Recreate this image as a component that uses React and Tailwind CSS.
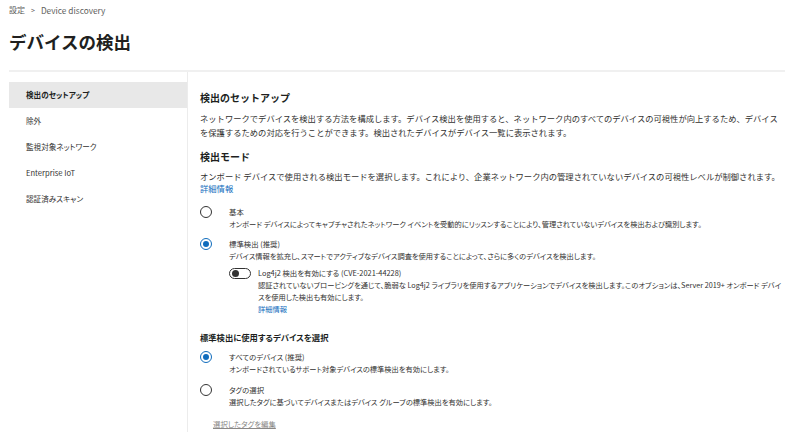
import React from 'react';

const jp = "font-['Segoe_UI','Noto_Sans_CJK_JP',sans-serif]";

const Radio = ({ checked }) => (
  <span
    className={`mt-[1px] flex h-[12px] w-[12px] shrink-0 items-center justify-center rounded-full border ${
      checked ? 'border-[#0f6cbd]' : 'border-[#333]'
    } bg-white`}
  >
    {checked && <span className="h-[6px] w-[6px] rounded-full bg-[#0f6cbd]" />}
  </span>
);

const Option = ({ checked, label, desc, children, className = '' }) => (
  <div className={`flex ${className}`}>
    <div className="w-[29px]">
      <Radio checked={checked} />
    </div>
    <div className="flex-1">
      <div className="text-[7.4px] leading-[13px] text-[#323130] [font-feature-settings:'palt']">{label}</div>
      <div className="text-[7.25px] leading-[13px] text-[#323130] [font-feature-settings:'palt']">{desc}</div>
      {children}
    </div>
  </div>
);

const navItems = ['検出のセットアップ', '除外', '監視対象ネットワーク', 'Enterprise IoT', '認証済みスキャン'];

export default function App() {
  return (
    <div className={`h-[433px] w-full overflow-hidden bg-white text-[#323130] ${jp}`}>
      <div className="flex items-center gap-[6px] pl-[9px] pt-[4px] text-[8px] leading-[12px] text-[#605e5c] [font-feature-settings:'palt']">
        <span>設定</span>
        <span className="text-[7px]">&gt;</span>
        <span className="text-[8.3px]">Device discovery</span>
      </div>
      <h1 className="mt-[14px] pl-[9px] text-[17.5px] font-semibold leading-[24px] text-[#201f1e]">デバイスの検出</h1>
      <div className="ml-[9px] mr-[15px] mt-[16px] flex border-t-2 border-[#f0f0f0]">
        <nav className="w-[179px] shrink-0 border-r border-[#ececec] pt-[10px]">
          {navItems.map((item, i) => (
            <div
              key={item}
              className={`flex items-center pl-[17px] text-[7.6px] [font-feature-settings:'palt'] ${
                i === 0 ? 'h-[26px] bg-[#e8e8e8] font-semibold text-[#201f1e]' : 'h-[26px] text-[#323130]'
              }`}
            >
              {item}
            </div>
          ))}
          <div className="h-[220px]" />
        </nav>
        <main className="flex-1 pl-[12px] pt-[19px]">
          <h2 className="text-[10px] font-bold leading-[14px] text-[#201f1e]">検出のセットアップ</h2>
          <p className="mt-[6px] text-[8.3px] leading-[14px] text-[#323130]">
            ネットワークでデバイスを検出する方法を構成します。デバイス検出を使用すると、ネットワーク内のすべてのデバイスの可視性が向上するため、デバイスを保護するための対応を行うことができます。検出されたデバイスがデバイス一覧に表示されます。
          </p>
          <h2 className="mt-[11px] text-[10px] font-bold leading-[14px] text-[#201f1e]">検出モード</h2>
          <p className="mt-[6px] text-[8.3px] leading-[12px] text-[#323130]">
            オンボード デバイスで使用される検出モードを選択します。これにより、企業ネットワーク内の管理されていないデバイスの可視性レベルが制御されます。
            <br />
            <span className="text-[#0f6cbd]">詳細情報</span>
          </p>
          <Option
            className="mt-[11px]"
            label="基本"
            desc="オンボード デバイスによってキャプチャされたネットワーク イベントを受動的にリッスンすることにより、管理されていないデバイスを検出および識別します。"
          />
          <Option
            className="mt-[6px]"
            checked
            label="標準検出 (推奨)"
            desc="デバイス情報を拡充し、スマートでアクティブなデバイス調査を使用することによって、さらに多くのデバイスを検出します。"
          >
            <div className="mt-[4px] flex">
              <span className="mt-[1px] flex h-[11px] w-[22px] shrink-0 items-center rounded-full border border-[#333] px-[2px]">
                <span className="h-[7px] w-[7px] rounded-full bg-[#333]" />
              </span>
              <div className="ml-[7px] flex-1 text-[7.25px] leading-[12px] [font-feature-settings:'palt'] [line-break:anywhere]">
                <div className="text-[7.4px]">Log4j2 検出を有効にする (CVE-2021-44228)</div>
                <div>
                  認証されていないプロービングを通じて、脆弱な Log4j2 ライブラリを使用するアプリケーションでデバイスを検出します。このオプションは、Server 2019+ オンボード デバイスを使用した検出も有効にします。
                </div>
                <div className="text-[#0f6cbd]">詳細情報</div>
              </div>
            </div>
          </Option>
          <h3 className="mt-[16px] text-[8.3px] font-semibold leading-[12px] text-[#201f1e] [font-feature-settings:'palt']">
            標準検出に使用するデバイスを選択
          </h3>
          <Option
            className="mt-[7px]"
            checked
            label="すべてのデバイス (推奨)"
            desc="オンボードされているサポート対象デバイスの標準検出を有効にします。"
          />
          <Option
            className="mt-[7px]"
            label="タグの選択"
            desc="選択したタグに基づいてデバイスまたはデバイス グループの標準検出を有効にします。"
          />
          <div className="mt-[9px] pl-[13px] text-[7.4px] leading-[12px] text-[#8a8886] underline [font-feature-settings:'palt']">
            選択したタグを編集
          </div>
        </main>
      </div>
    </div>
  );
}
